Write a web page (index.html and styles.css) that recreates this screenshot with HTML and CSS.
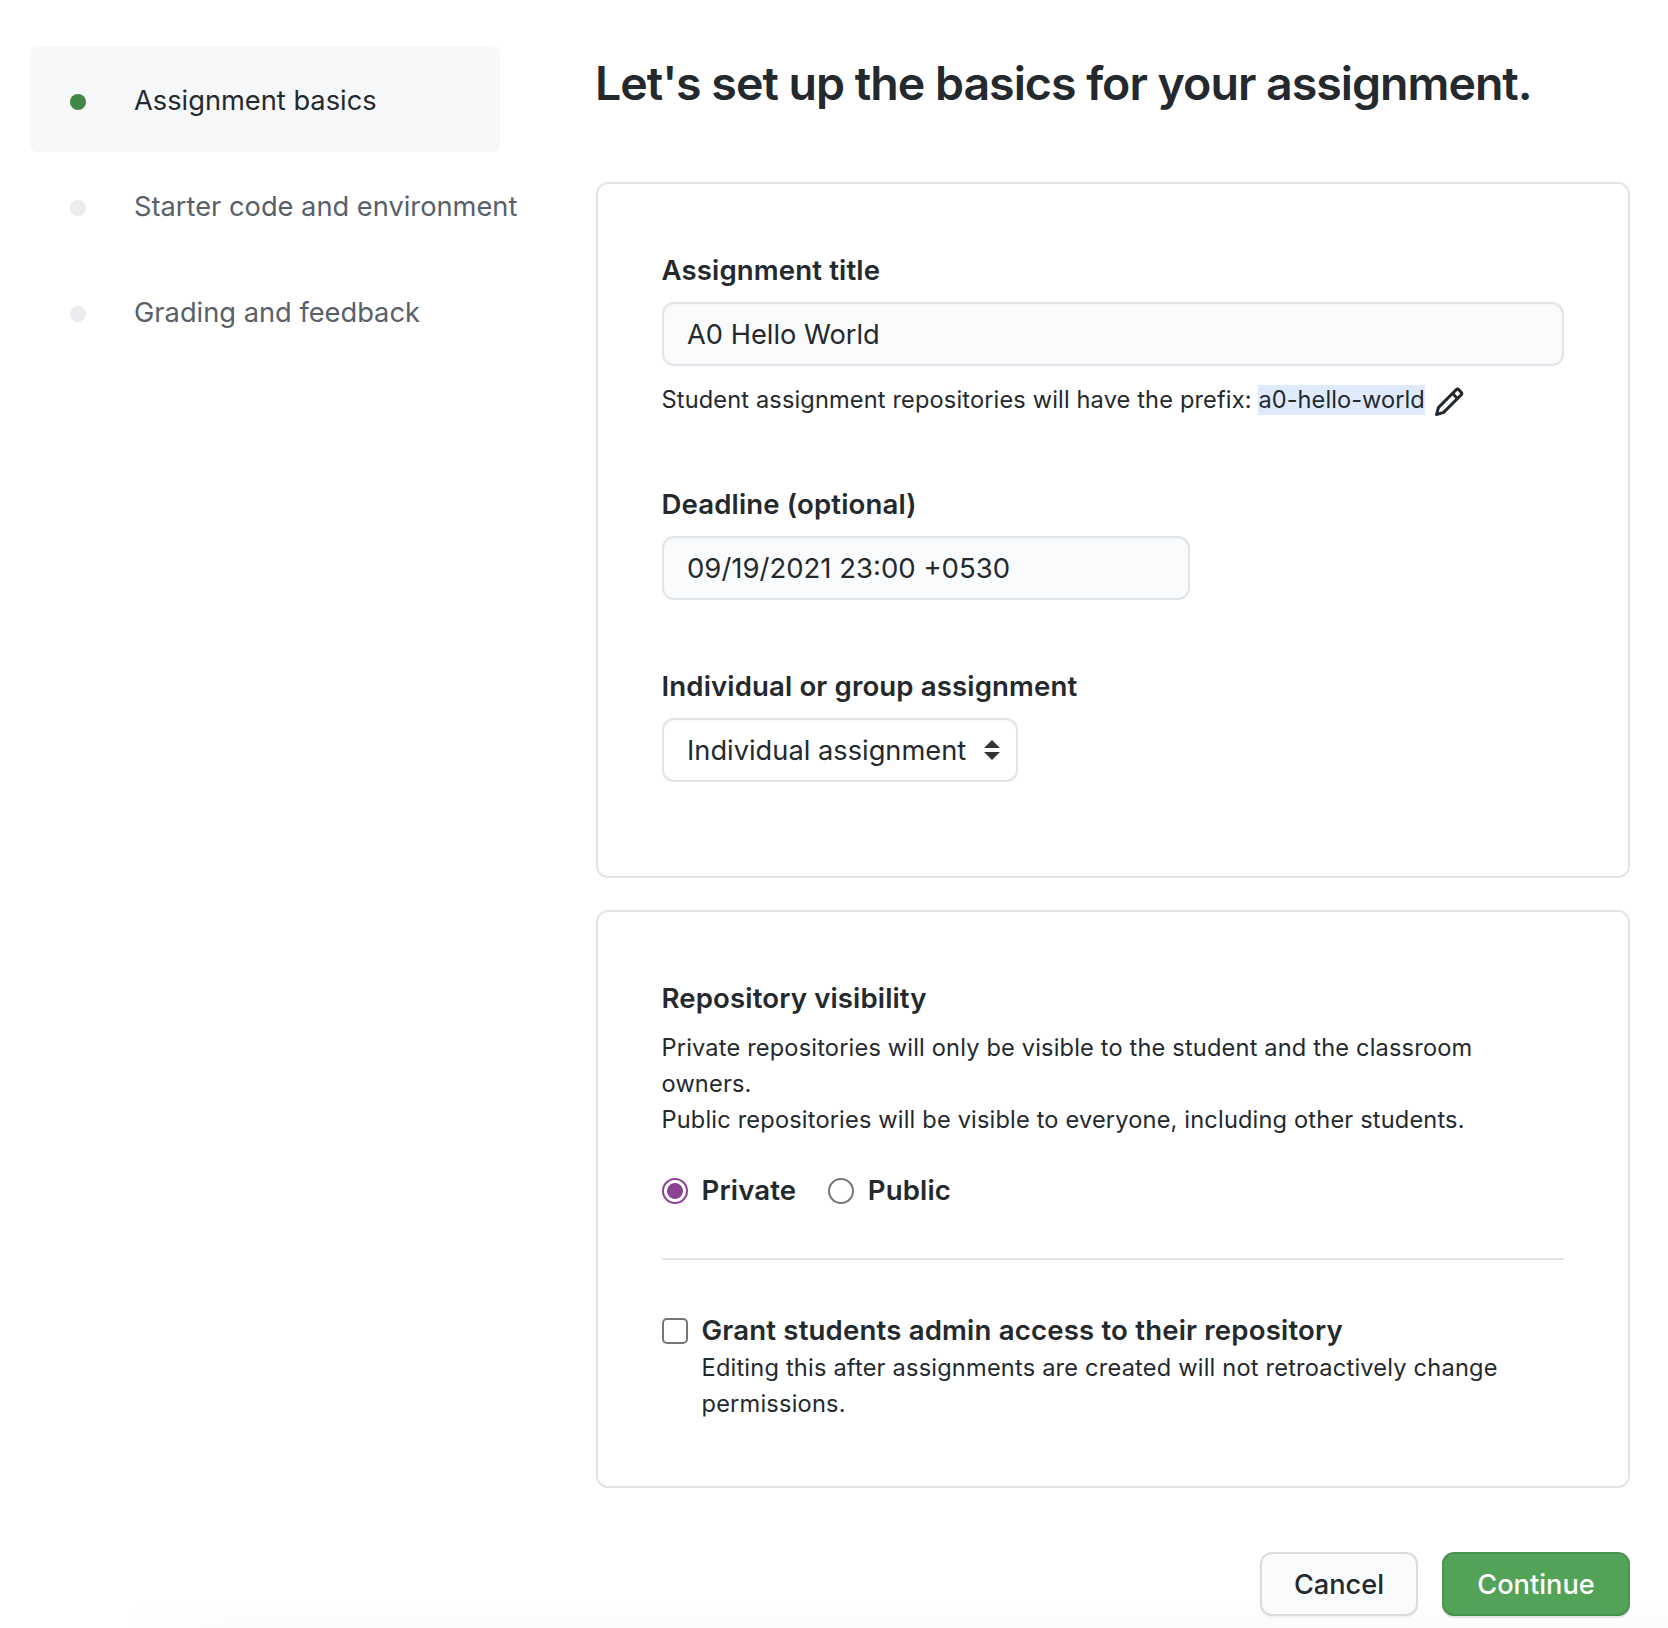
FILE: index.html
```html
<!DOCTYPE html>
<html lang="en">
<head>
<meta charset="utf-8">
<title>New assignment</title>
<link rel="stylesheet" href="styles.css">
</head>
<body>
<div class="page">
  <nav class="steps">
    <a class="step step-current"><span class="dot"></span><span class="step-name">Assignment basics</span></a>
    <a class="step"><span class="dot"></span><span class="step-name">Starter code and environment</span></a>
    <a class="step"><span class="dot"></span><span class="step-name">Grading and feedback</span></a>
  </nav>
  <main class="content">
    <h1 class="title">Let's set up the basics for your assignment.</h1>

    <section class="card card-basics">
      <div class="group">
        <label class="label" for="name">Assignment title</label>
        <input class="control" id="name" type="text" value="A0 Hello World">
        <p class="text hint">Student assignment repositories will have the prefix: <span class="prefix">a0-hello-world</span><svg class="pencil" viewBox="0 0 16 16" width="32" height="32" aria-hidden="true"><path fill-rule="evenodd" d="M11.013 1.427a1.75 1.75 0 012.474 0l1.086 1.086a1.75 1.75 0 010 2.474l-8.61 8.61c-.21.21-.47.364-.756.445l-3.251.93a.75.75 0 01-.927-.928l.929-3.25a1.75 1.75 0 01.445-.758l8.61-8.61zm1.414 1.06a.25.25 0 00-.354 0L10.811 3.75l1.439 1.44 1.263-1.263a.25.25 0 000-.354l-1.086-1.086zM11.189 6.25L9.75 4.81l-6.286 6.287a.25.25 0 00-.064.108l-.558 1.953 1.953-.558a.249.249 0 00.108-.064l6.286-6.286z"/></svg></p>
      </div>
      <div class="group">
        <label class="label" for="deadline">Deadline (optional)</label>
        <input class="control control-date" id="deadline" type="text" value="09/19/2021 23:00 +0530">
      </div>
      <div class="group">
        <span class="label">Individual or group assignment</span>
        <button class="control control-select" type="button">Individual assignment<svg width="16" height="20" viewBox="0 0 16 20" aria-hidden="true"><path d="M8 0l8 8H0zM8 20l8-8H0z"/></svg></button>
      </div>
    </section>

    <section class="card card-visibility">
      <h2 class="label">Repository visibility</h2>
      <p class="text">Private repositories will only be visible to the student and the classroom owners.<br>Public repositories will be visible to everyone, including other students.</p>
      <div class="radios">
        <label class="choice"><input class="radio" type="radio" name="visibility" checked><span class="choice-name">Private</span></label>
        <label class="choice"><input class="radio" type="radio" name="visibility"><span class="choice-name">Public</span></label>
      </div>
      <hr class="rule">
      <div class="grant">
        <input class="checkbox" id="admin" type="checkbox">
        <div class="grant-body">
          <label class="label grant-name" for="admin">Grant students admin access to their repository</label>
          <p class="text grant-text">Editing this after assignments are created will not retroactively change permissions.</p>
        </div>
      </div>
    </section>

    <div class="actions">
      <button class="btn" type="button">Cancel</button>
      <button class="btn btn-primary" type="button">Continue</button>
    </div>
  </main>
</div>
</body>
</html>
```
FILE: styles.css
```css
* { box-sizing: border-box; }

body {
  margin: 0;
  color: #24292e;
  background: #fff;
  font-family: Inter, "Liberation Sans", sans-serif;
  font-size: 27.25px;
}

.page {
  display: flex;
  gap: 96px;
  height: 1628px;
  padding: 46px 38px 0 30px;
  overflow: hidden;
  background:
    linear-gradient(to right, #fff 130px, rgba(255, 255, 255, 0) 260px),
    linear-gradient(to top, #fbfbfb, #fff 28px);
}

.steps { flex: none; width: 470px; }

.step {
  display: flex;
  align-items: center;
  height: 106px;
  padding-left: 40px;
  border-radius: 8px;
  color: #586069;
  white-space: nowrap;
}

.step-current { background: #f6f8fa; color: #24292e; }

.dot {
  flex: none;
  width: 16px;
  height: 16px;
  margin: 6px 48px 0 0;
  border-radius: 50%;
  background: #eaecef;
}

.step-current .dot { background: #3f8742; }

.step-name { line-height: 42px; margin-top: 4px; }

.content { flex: none; width: 1034px; padding-top: 7px; }

.title {
  margin: 0 0 69px -1px;
  font-size: 46.5px;
  font-weight: 600;
  line-height: 60px;
  letter-spacing: -1px;
  white-space: nowrap;
}

.card {
  padding: 65px 64px;
  border: 2px solid #e1e4e8;
  border-radius: 12px;
}

.card-basics {
  display: flex;
  flex-direction: column;
  gap: 65px;
  height: 696px;
}

.card-visibility { height: 578px; margin-top: 32px; }

.label {
  display: block;
  margin: 0 0 0 -0.5px;
  font-size: 27.6px;
  font-weight: 600;
  line-height: 42px;
  letter-spacing: 0.13px;
}

.control {
  display: block;
  width: 100%;
  height: 64px;
  margin: 11px 0 0;
  padding: 0 23px;
  border: 2px solid #e1e4e8;
  border-radius: 12px;
  background: #fafbfc;
  box-shadow: inset 0 2px 0 rgba(225, 228, 232, 0.2);
  color: inherit;
  font: inherit;
}

.control-date { width: 528px; font-size: 27.5px; }

.control-select {
  display: flex;
  align-items: center;
  justify-content: space-between;
  width: 356px;
  padding-right: 16px;
  background: #fff;
}

.control-select svg { fill: #333; }

.text {
  margin: 11px 0 0 -0.5px;
  font-size: 23.6px;
  line-height: 36px;
  letter-spacing: 0.17px;
}

.hint {
  display: flex;
  align-items: center;
  height: 36px;
  margin-top: 16px;
  letter-spacing: 0.14px;
  white-space: pre;
}

.prefix { line-height: 30px; background: #dfebfd; letter-spacing: 0.05px; }

.pencil { flex: none; margin: 3px 0 0 8px; fill: #24292e; }

.radios { display: flex; gap: 32px; height: 42px; margin-top: 31px; }

.choice { display: flex; align-items: center; gap: 13.5px; }

.choice-name { font-size: 27.6px; font-weight: 600; line-height: 42px; letter-spacing: 0.13px; }

.radio,
.checkbox {
  flex: none;
  appearance: none;
  width: 26px;
  height: 26px;
  margin: 0;
  border: 2px solid #767676;
  background: #fff;
}

.radio { margin-top: 2px; border-radius: 50%; }

.radio:checked {
  border-color: #8a4393;
  background: radial-gradient(circle, #8a4393 7.5px, #fff 8.3px);
}

.rule { height: 2px; margin: 47px 0 50px; border: 0; background: #e1e4e8; }

.grant { display: flex; gap: 14px; }

.checkbox { margin-top: 8px; border-radius: 5px; }

.grant-name { line-height: 40px; letter-spacing: 0.17px; }

.grant-text { margin-top: 0; letter-spacing: 0.2px; }

.actions { display: flex; justify-content: flex-end; gap: 24px; margin-top: 64px; }

.btn {
  width: 158px;
  height: 64px;
  padding: 0;
  border: 2px solid #d9dbdd;
  border-radius: 12px;
  background: #fafbfc;
  box-shadow: 0 2px 0 rgba(27, 31, 35, 0.04);
  color: #24292e;
  font: 550 27.2px Inter, "Liberation Sans", sans-serif;
}

.btn-primary {
  width: 188px;
  border-color: #49914f;
  background: #52a258;
  box-shadow: 0 2px 0 rgba(27, 31, 35, 0.1), inset 0 2px 0 rgba(255, 255, 255, 0.03);
  color: #fff;
}
```
